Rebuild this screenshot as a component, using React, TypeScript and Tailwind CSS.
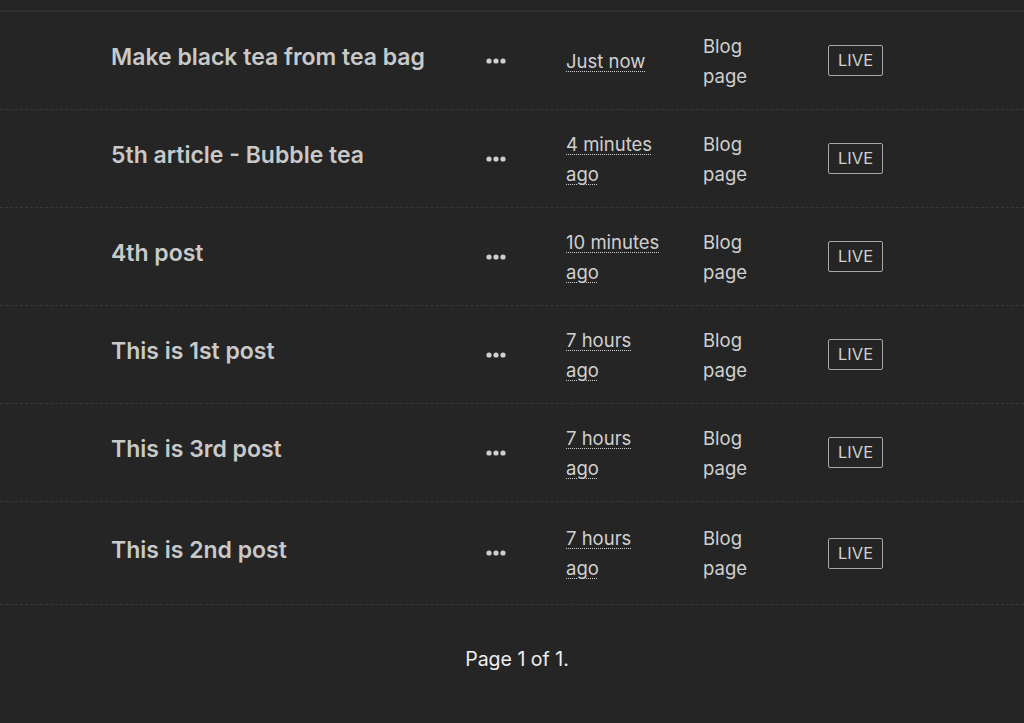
const posts = [
  { title: 'Make black tea from tea bag', time: 'Just now' },
  { title: '5th article - Bubble tea', time: '4 minutes ago' },
  { title: '4th post', time: '10 minutes ago' },
  { title: 'This is 1st post', time: '7 hours ago' },
  { title: 'This is 3rd post', time: '7 hours ago' },
  { title: 'This is 2nd post', time: '7 hours ago' },
];

function Dots() {
  return (
    <svg width="20" height="6" viewBox="0 0 20 6" fill="#cfcfcf">
      <circle cx="3" cy="3" r="2.6" />
      <circle cx="10" cy="3" r="2.6" />
      <circle cx="17" cy="3" r="2.6" />
    </svg>
  );
}

export default function App() {
  return (
    <div
      className="min-h-[723px] w-full bg-[#252525] pt-[10px] text-[#d4d4d4]"
      style={{ fontFamily: 'Inter, "Liberation Sans", sans-serif' }}
    >
      <div className="border-t-2 border-[#303030]">
        {posts.map((p, i) => (
          <div
            key={p.title}
            className={
              'flex items-center border-b border-dashed border-[#383838] pl-[111px] ' +
              (i === posts.length - 1 ? 'h-[103px]' : 'h-[98px]')
            }
          >
            <div className="w-[355px] pb-[6px] text-[23px] font-semibold text-[#c9c9c9]">{p.title}</div>
            <div className="flex w-[60px] justify-center">
              <Dots />
            </div>
            <div className="ml-[40px] w-[98px] text-[18.5px] leading-[30px] text-[#d0d0d0]">
              <span className="underline decoration-dotted decoration-1 underline-offset-[3px]">{p.time}</span>
            </div>
            <div className="ml-[39px] w-[50px] text-[18.5px] leading-[30px] text-[#d0d0d0]">Blog page</div>
            <div className="ml-[75px]">
              <span className="inline-block rounded-[2px] border border-[#a8a8a8] px-[9px] py-[4px] text-[16.5px] leading-[21px] text-[#d0d0d0]">
                LIVE
              </span>
            </div>
          </div>
        ))}
      </div>
      <div className="pl-[10px] pt-[40px] text-center text-[19.5px] text-[#eeeeee]">Page 1 of 1.</div>
    </div>
  );
}
